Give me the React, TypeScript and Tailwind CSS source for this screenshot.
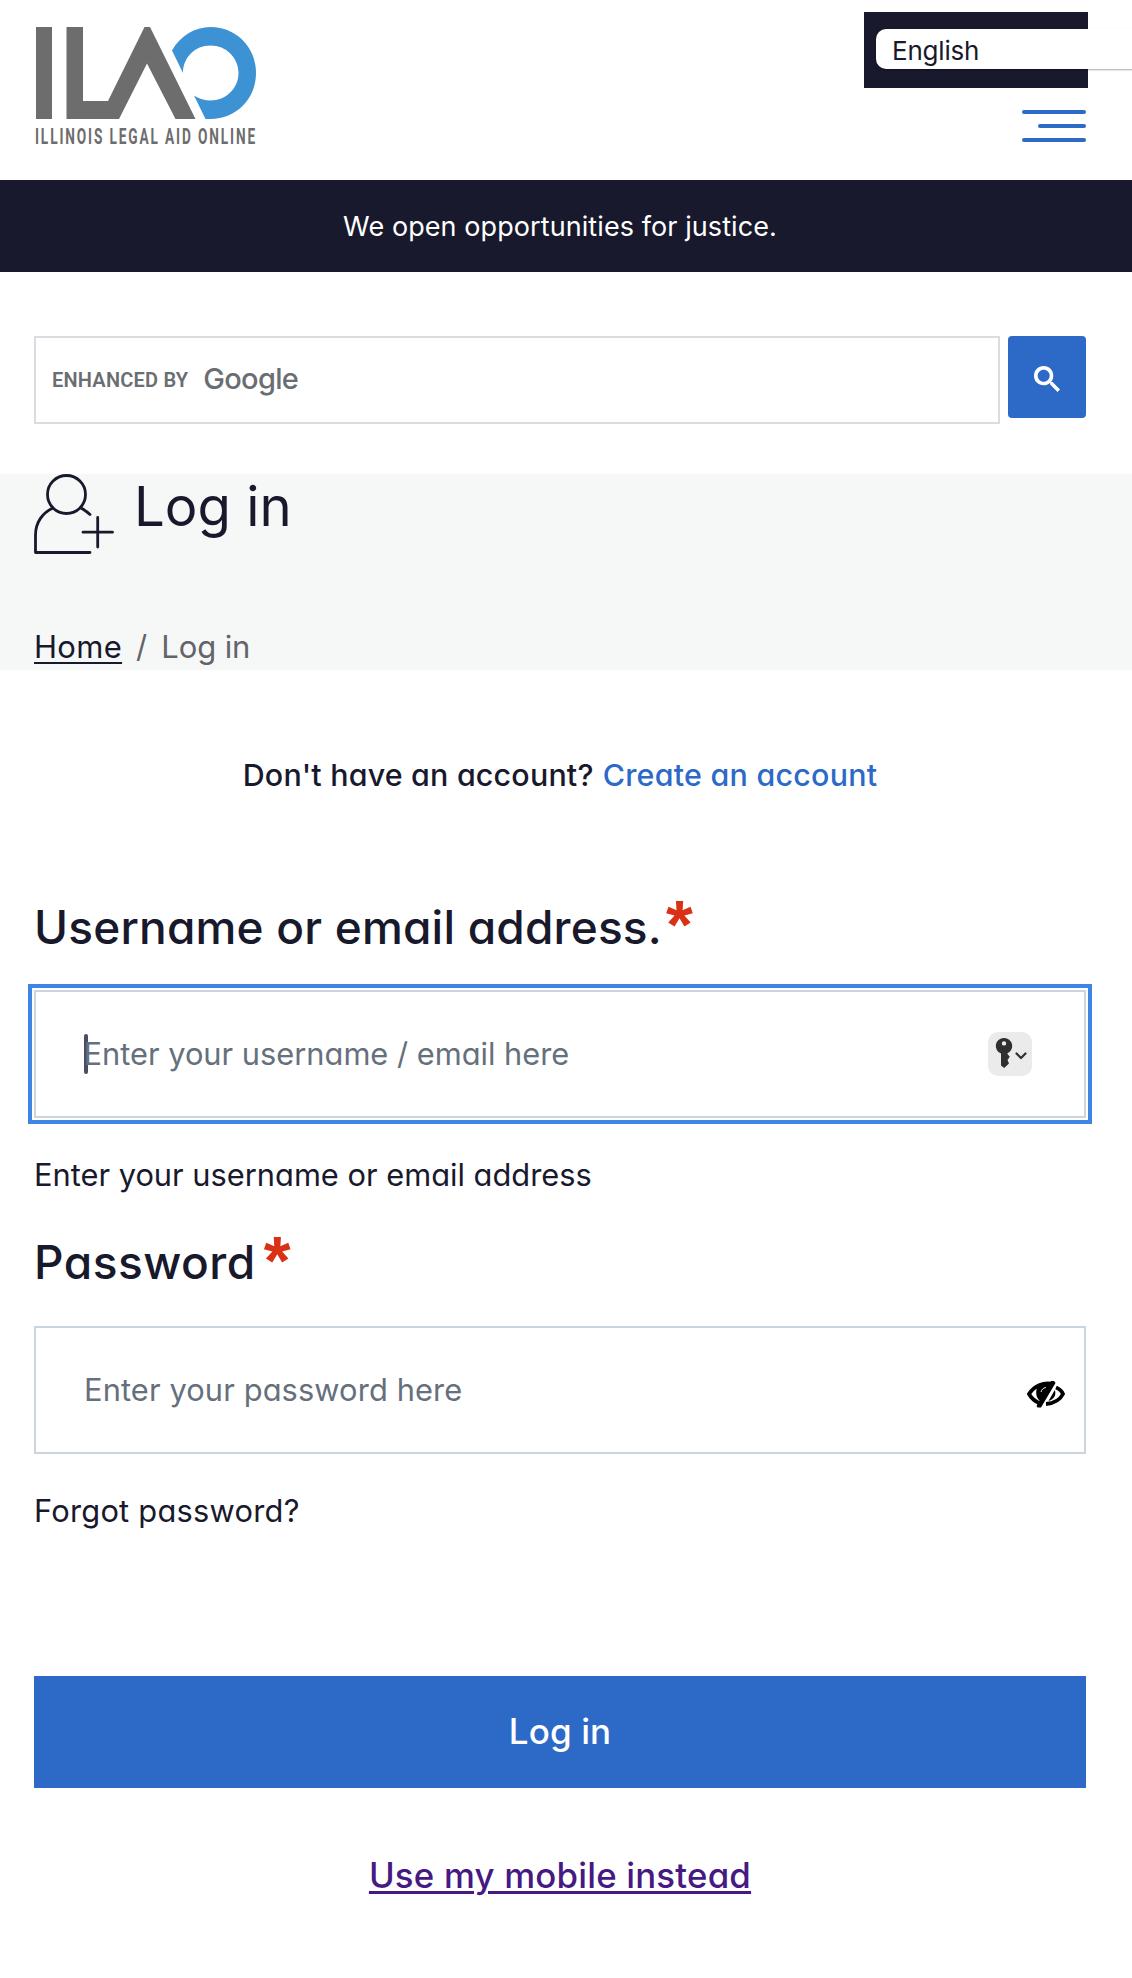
import React from "react";

const inter = "font-['Inter','Open_Sans',sans-serif] [font-feature-settings:'cv11']";

function Logo() {
  return (
    <svg width="226" height="124" viewBox="0 0 226 124" className="mt-[26px] block overflow-visible" aria-label="Illinois Legal Aid Online">
      <g fill="#6d6d6d">
        <path d="M1 1H17V93H1Z" />
        <path d="M31.500 1H48V75H73L109.500 1H115L160.500 93H140.500L112 37.500L84 93H31.500Z" />
      </g>
      <path
        fill="#3d92d4"
        d="M137 24.500C145 10 160 1 175.500 1C201 1 221 21 221 47C221 73 201 93 175.500 93H170.500L159 69.500C164 73 170 74.500 175.500 74.500C191 74.500 203.500 62.500 203.500 47C203.500 31.500 191 19.500 175.500 19.500C160 19.500 148 31.500 148 47Z"
      />
      <text
        x="0"
        y="118"
        fill="#6d6d6d"
        className="font-['Roboto',sans-serif] text-[22px] font-bold tracking-[3px]"
        textLength="222"
        lengthAdjust="spacingAndGlyphs"
      >
        ILLINOIS LEGAL AID ONLINE
      </text>
    </svg>
  );
}

function Header() {
  return (
    <header className="flex h-[180px] justify-between pl-[35px]">
      <Logo />
      <div className="w-[268px] overflow-hidden pt-3">
        <div className="h-[76px] w-[224px] bg-[#18192c] pt-[17px] pl-3">
          <div className="h-10 w-[300px] rounded-[10px] bg-white pl-4 font-['Inter',sans-serif] text-[26px] leading-[44px] tracking-[-0.2px] text-[#18192c] shadow-[0_1px_2px_rgba(0,0,0,0.35)]">
            English
          </div>
        </div>
        <div className="mt-[22px] flex w-[222px] flex-col items-end gap-[10px]">
          <span className="h-1 w-16 rounded-full bg-[#2d6ac7]" />
          <span className="h-1 w-12 rounded-full bg-[#2d6ac7]" />
          <span className="h-1 w-16 rounded-full bg-[#2d6ac7]" />
        </div>
      </div>
    </header>
  );
}

function SearchBar() {
  return (
    <div className="mt-16 flex items-start gap-2 pr-[46px] pl-[34px]">
      <div className="flex h-[88px] w-[966px] items-start border-2 border-[#dcdbe2] pl-4 text-[#6a6d72]">
        <span className="font-['Roboto',sans-serif] text-[20px] leading-[84px] font-semibold tracking-[0.2px]">ENHANCED BY</span>
        <span className="ml-[15px] font-['Inter',sans-serif] text-[29px] leading-[81px] font-medium tracking-[-0.7px]">Google</span>
      </div>
      <div className="flex h-[82px] w-[78px] items-center justify-center rounded-[4px] bg-[#2d6ac7] pt-[3px]">
        <svg width="26" height="26" viewBox="0 0 13 13" fill="#fff">
          <path d="m4.8495 7.8226c0.82666 0 1.5262-0.29146 2.0985-0.87438 0.57232-0.58292 0.86378-1.2877 0.87438-2.1144 0.010599-0.82666-0.28086-1.5262-0.87438-2.0985-0.59352-0.57232-1.293-0.86378-2.0985-0.87438-0.8055-0.010599-1.5103 0.28086-2.1144 0.87438-0.60414 0.59352-0.8956 1.293-0.87438 2.0985 0.021197 0.8055 0.31266 1.5103 0.87438 2.1144 0.56172 0.60414 1.2665 0.8956 2.1144 0.87438zm4.4695 0.2115 3.681 3.6819-1.259 1.284-3.6817-3.7 0.0019784-0.69479-0.090043-0.098846c-0.87973 0.76087-1.92 1.1413-3.1207 1.1413-1.3553 0-2.5025-0.46363-3.4417-1.3909s-1.4088-2.0686-1.4088-3.4239c0-1.3553 0.4696-2.4966 1.4088-3.4239 0.9392-0.92727 2.0864-1.3969 3.4417-1.4088 1.3553-0.011889 2.4906 0.45771 3.406 1.4088 0.9154 0.95107 1.379 2.0924 1.3909 3.4239 0 1.2126-0.38043 2.2588-1.1413 3.1385l0.098834 0.090049z" />
        </svg>
      </div>
    </div>
  );
}

function PageTitle() {
  return (
    <section className="mt-[50px] h-[196px] bg-[#f6f8f8] pl-[34px]">
      <div className="flex h-[140px] gap-[20px]">
        <svg width="80" height="80" viewBox="0 0 80 80" fill="none" stroke="#18192c" strokeWidth="2.800" strokeLinecap="round" strokeLinejoin="round">
          <circle cx="32.500" cy="20.500" r="19" />
          <path d="M19 34C8 39 1.500 49 1.500 61V78.500H56" />
          <path d="M47 34C50.500 36 53.500 38 56 40.500" />
          <path d="M63.700 43.500V73M49 58.200H78.500" />
        </svg>
        <h1 className="text-[54.500px] leading-[65px] font-normal">Log in</h1>
      </div>
      <nav className="flex text-[31px] leading-[65px]">
        <a className="tracking-[0.3px] underline decoration-2 underline-offset-[4px]">Home</a>
        <span className="ml-[14px] text-[#63646b]">/</span>
        <span className="ml-[14px] tracking-[-0.1px] text-[#63646b]">Log in</span>
      </nav>
    </section>
  );
}

function Required() {
  return <span className="relative top-[3px] font-['Liberation_Sans',sans-serif] text-[69px] leading-none font-bold tracking-normal text-[#d93016]">*</span>;
}

function KeyBadge() {
  return (
    <span className="flex size-11 items-center justify-center rounded-[10px] bg-[#ebebeb]">
      <svg width="44" height="44" viewBox="0 0 44 44">
        <path fill="#2f2f2f" fillRule="evenodd" d="M16 6A8 8 0 0 1 19.500 21.300V22L21.800 24.800L19.500 28L21 31.500L16.200 36L13 33.500V21.500A8 8 0 0 1 16 6ZM16 9.200A2.200 2.200 0 1 0 16 13.600A2.200 2.200 0 1 0 16 9.200Z" />
        <path d="M28.500 21.500L33 26L37.500 21.500" fill="none" stroke="#2f2f2f" strokeWidth="2.200" strokeLinecap="round" strokeLinejoin="round" />
      </svg>
    </span>
  );
}

function EyeSlash() {
  return (
    <svg width="38" height="27" viewBox="0 0 38 27">
      <path d="M26 3C16 1 7 5 2 13C4.500 17.500 8 20.500 13 22.500" fill="none" stroke="#000" strokeWidth="3.800" />
      <path d="M11 5C8 10 9 16.500 12.500 19.500L9.500 25L10.500 26.500H14L28.500 2L27 0H24L22 3C18 2 14 2.500 11 5Z" fill="#000" />
      <path d="M14 11C14.500 8.500 16.500 6.800 19 6.500" fill="none" stroke="#fff" strokeWidth="0.900" />
      <path d="M29 6.500C32.500 8 34.800 10 36 13C33 19 27.500 22.300 19 23" fill="none" stroke="#000" strokeWidth="3.800" />
      <path d="M27.800 9C29.500 14 27 18 21.500 20Z" fill="#000" />
    </svg>
  );
}

export default function App() {
  return (
    <div className={`h-[1978px] w-[1132px] overflow-hidden bg-white text-[#18192c] whitespace-nowrap ${inter}`}>
      <Header />
      <div className="h-[92px] bg-[#18192c] pr-[46px] pl-[34px] text-center text-[27px] leading-[94px] tracking-[0.08px] text-white">
        We open opportunities for justice.
      </div>
      <SearchBar />
      <PageTitle />
      <main className="pr-[46px] pl-[34px]">
        <p className="mt-[75px] flex h-[60px] justify-center gap-[9px] text-[30.400px] leading-[60px] font-medium">
          <span className="tracking-[0.2px]">Don't have an account?</span>
          <a className="tracking-[0.25px] text-[#2d6ac7]">Create an account</a>
        </p>
        <label className="mt-[82px] flex h-[80px] gap-1 text-[46px] leading-[80px] font-medium tracking-[0.2px]">
          Username or email address.
          <Required />
        </label>
        <div className="mt-[23px] flex h-[128px] items-center justify-between border-2 border-[#cbd5de] pr-[52px] pl-12 outline-4 outline-offset-2 outline-[#3f86e4]">
          <div className="flex items-center">
            <span className="h-[40px] w-[3.500px] rounded-full bg-[#4b4d61]" />
            <span className="-ml-[4px] text-[30.800px] leading-[60px] text-[#65707c]">Enter your username / email here</span>
          </div>
          <KeyBadge />
        </div>
        <p className="mt-[27px] h-[60px] text-[30.800px] leading-[60px]">Enter your username or email address</p>
        <label className="mt-[18px] flex h-[80px] gap-2 text-[46px] leading-[79px] font-medium tracking-[0.5px]">
          Password
          <Required />
        </label>
        <div className="mt-[23px] flex h-[128px] items-center justify-between border-2 border-[#cbd5de] pr-[19px] pl-12">
          <span className="text-[30.800px] leading-[60px] tracking-[0.12px] text-[#65707c]">Enter your password here</span>
          <span className="pt-2">
            <EyeSlash />
          </span>
        </div>
        <a className="mt-[27px] block h-[60px] text-[30.800px] leading-[60px] tracking-[0.25px]">Forgot password?</a>
        <button className="mt-[135px] block h-[112px] w-full bg-[#2d6ac7] text-[35px] leading-[112px] font-medium tracking-[0.1px] text-white">
          <span className="block h-[112px] leading-[110px]">Log in</span>
        </button>
        <p className="mt-[54px] text-center text-[34.800px] leading-[67px] font-medium tracking-[0.2px]">
          <a className="text-[#461a82] underline decoration-[3px] underline-offset-[3px]">Use my mobile instead</a>
        </p>
      </main>
    </div>
  );
}
